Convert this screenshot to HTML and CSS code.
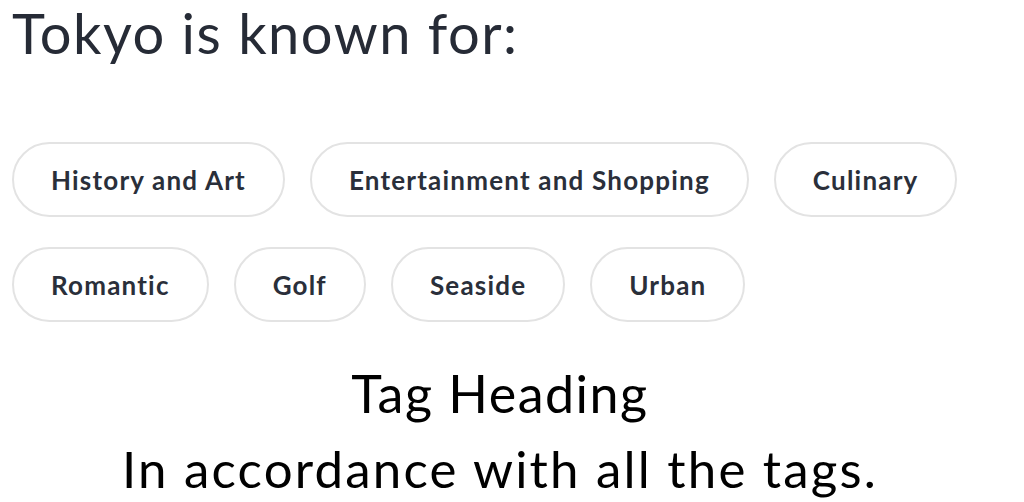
FILE: index.html
```html
<!DOCTYPE html>
<html>
<head>
<meta charset="utf-8">
<link rel="stylesheet" href="styles.css">
</head>
<body>
<main class="page">
  <h1 class="title">Tokyo is known for:</h1>
  <ul class="tags">
    <li class="tag">History and Art</li>
    <li class="tag">Entertainment and Shopping</li>
    <li class="tag">Culinary</li>
    <li class="tag">Romantic</li>
    <li class="tag">Golf</li>
    <li class="tag">Seaside</li>
    <li class="tag">Urban</li>
  </ul>
  <section class="summary">
    <h2 class="summary-heading">Tag Heading</h2>
    <p class="summary-text">In accordance with all the tags.</p>
  </section>
</main>
</body>
</html>
```
FILE: styles.css
```css
html, body {
  margin: 0;
  padding: 0;
  background: #ffffff;
}
.page {
  width: 988px;
  padding: 0 0 0 12px;
  box-sizing: border-box;
  font-family: Lato, "Noto Sans", sans-serif;
}
.title {
  margin: 0;
  padding-top: 0;
  font-size: 56px;
  font-weight: 400;
  letter-spacing: 1.5px;
  line-height: 66px;
  color: #262b36;
}
.tags {
  list-style: none;
  margin: 76px 0 0 0;
  padding: 0;
  display: flex;
  flex-wrap: wrap;
  column-gap: 25px;
  row-gap: 30px;
}
.tag {
  box-sizing: border-box;
  height: 75px;
  display: flex;
  align-items: center;
  padding: 0 37px;
  border: 2px solid #e3e3e3;
  border-radius: 38px;
  font-size: 26px;
  font-weight: 700;
  letter-spacing: 1.2px;
  color: #2a2f3a;
}
.summary {
  text-align: center;
  margin-top: 41px;
}
.summary-heading {
  margin: 0;
  font-size: 52px;
  font-weight: 400;
  letter-spacing: 1.5px;
  line-height: 60px;
  color: #000;
}
.summary-text {
  margin: 16px 0 0;
  font-size: 51px;
  letter-spacing: 2.2px;
  line-height: 60px;
  color: #000;
}
```
